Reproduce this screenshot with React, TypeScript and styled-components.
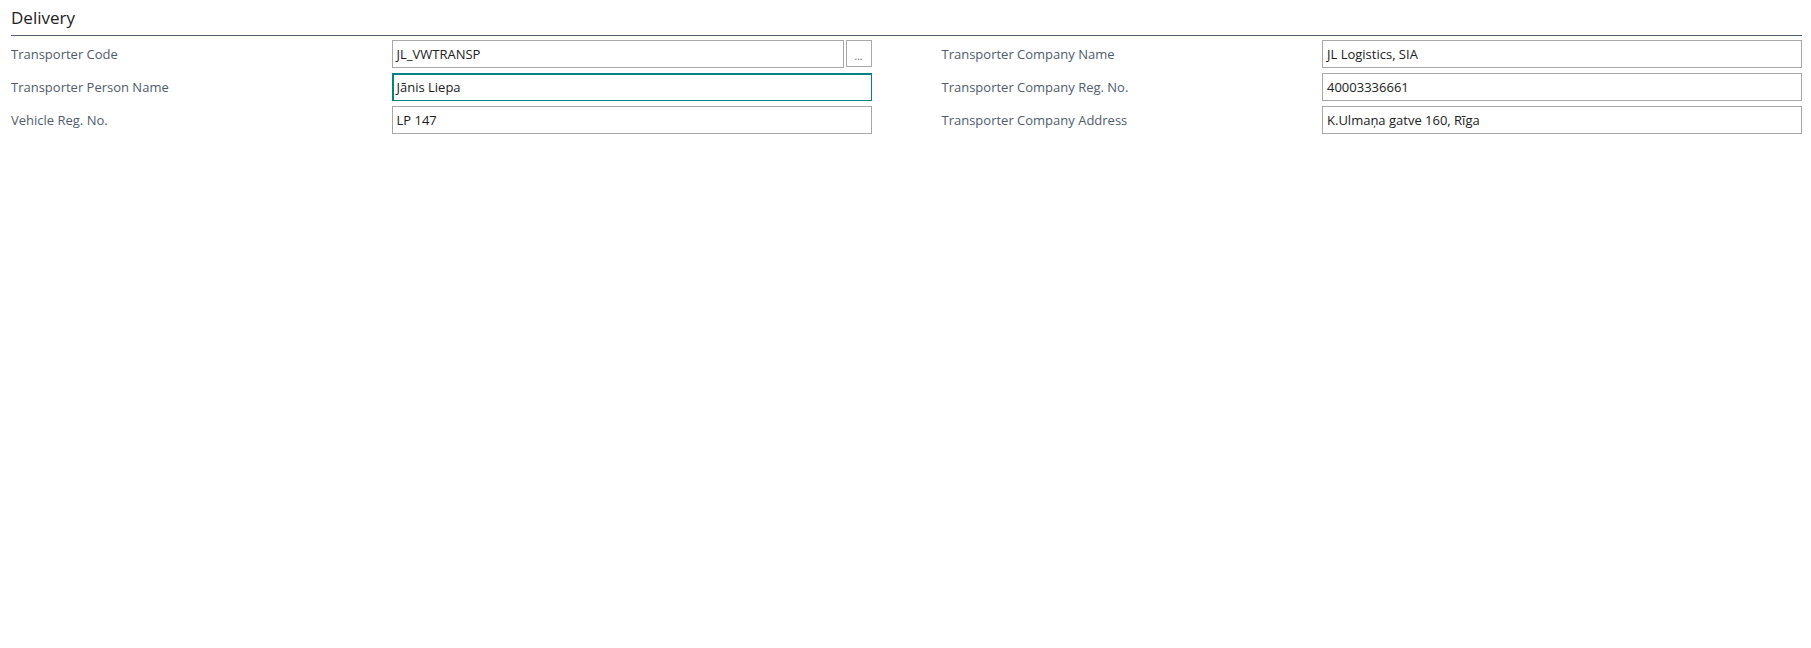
import React, { FC } from 'react'
import styled, { createGlobalStyle } from 'styled-components'

const GlobalStyle = createGlobalStyle`
  body {
    margin: 0;
    background: #ffffff;
    font-family: 'Open Sans', 'Noto Sans', sans-serif;
  }
`

const Page = styled.main`
  padding: 6px 9px 0 11px;
`

const Title = styled.h2`
  margin: 0;
  padding-bottom: 5px;
  font-size: 17px;
  font-weight: 400;
  line-height: 24px;
  color: #212121;
  border-bottom: 1px solid #505c6d;
`

const Columns = styled.div`
  display: grid;
  grid-template-columns: 1fr 1fr;
  column-gap: 70px;
  margin-top: 4px;
`

const Column = styled.div`
  display: flex;
  flex-direction: column;
  gap: 5px;
`

const Row = styled.div`
  display: grid;
  grid-template-columns: 1fr 480px;
  align-items: center;
  height: 28px;
`

const Label = styled.label`
  font-size: 13px;
  color: #505c6d;
  white-space: nowrap;
`

const InputWrap = styled.div`
  display: flex;
  gap: 2px;
  height: 100%;
`

const Input = styled.div<{ $focused?: boolean }>`
  flex: 1;
  display: flex;
  align-items: center;
  box-sizing: border-box;
  height: 100%;
  padding: 0 4px;
  font-size: 13px;
  color: #212121;
  border: 1px solid ${p => (p.$focused ? '#008580' : '#a8a8a8')};
  box-shadow: ${p => (p.$focused ? 'inset 1px 1px 0 #008580' : 'none')};
  white-space: nowrap;
`

const LookupButton = styled.button`
  box-sizing: border-box;
  width: 26px;
  height: 27px;
  padding: 4px 0 0;
  border: 1px solid #a8a8a8;
  background: #ffffff;
  color: #606060;
  font-family: inherit;
  font-size: 10px;
  line-height: 1;
`

interface FieldProps {
  label: string
  value: string
  focused?: boolean
  lookup?: boolean
}

const Field: FC<FieldProps> = ({ label, value, focused, lookup }) => (
  <Row>
    <Label>{label}</Label>
    <InputWrap>
      <Input $focused={focused}>{value}</Input>
      {lookup && <LookupButton>...</LookupButton>}
    </InputWrap>
  </Row>
)

const App: FC = () => (
  <>
    <GlobalStyle />
    <Page>
      <Title>Delivery</Title>
      <Columns>
        <Column>
          <Field label="Transporter Code" value="JL_VWTRANSP" lookup />
          <Field label="Transporter Person Name" value="Jānis Liepa" focused />
          <Field label="Vehicle Reg. No." value="LP 147" />
        </Column>
        <Column>
          <Field label="Transporter Company Name" value="JL Logistics, SIA" />
          <Field label="Transporter Company Reg. No." value="40003336661" />
          <Field label="Transporter Company Address" value="K.Ulmaņa gatve 160, Rīga" />
        </Column>
      </Columns>
    </Page>
  </>
)

export default App
